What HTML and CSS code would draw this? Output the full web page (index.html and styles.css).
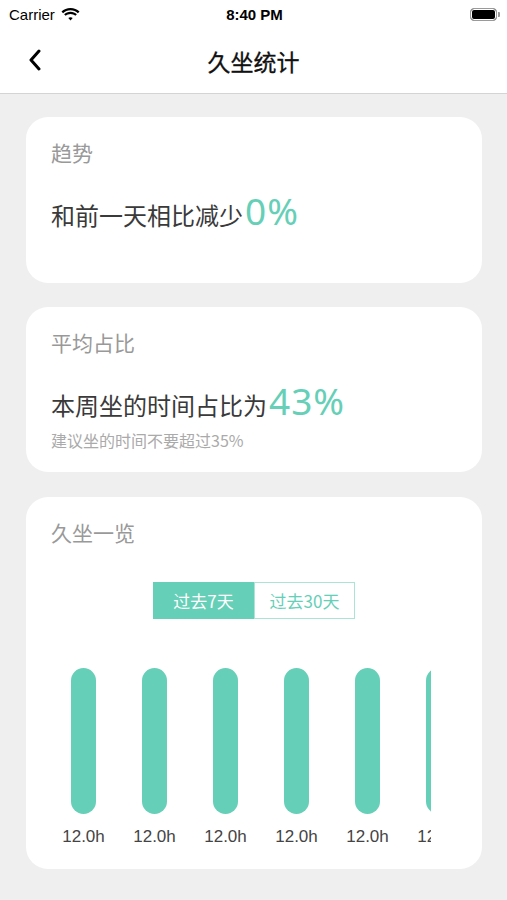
FILE: index.html
```html
<!DOCTYPE html>
<html lang="zh-CN">
<head>
  <meta charset="UTF-8">
  <meta name="viewport" content="width=device-width, initial-scale=1.0">
  <title>久坐统计</title>
  <link rel="stylesheet" href="styles.css">
</head>
<body>
  <div class="statusbar">
    <div class="carrier">
      Carrier
      <svg class="wifi" width="19" height="13" viewBox="0 0 19 13">
        <path d="M9.5 2.2c2.9 0 5.5 1.1 7.4 3l1.6-1.6C16.2 1.3 13 0 9.5 0S2.8 1.3.5 3.6l1.6 1.6c1.9-1.9 4.5-3 7.4-3z" fill="#000"/>
        <path d="M9.5 5.9c1.9 0 3.5.7 4.8 1.9l1.6-1.6C14.2 4.6 12 3.7 9.5 3.7S4.8 4.6 3.1 6.2l1.6 1.6c1.3-1.2 2.9-1.9 4.8-1.9z" fill="#000"/>
        <path d="M9.5 9.2c.9 0 1.6.3 2.2.9L9.5 12.6 7.3 10.1c.6-.6 1.3-.9 2.2-.9z" fill="#000"/>
      </svg>
    </div>
    <div class="time">8:40 PM</div>
    <div class="battery"><span class="battery-fill"></span><span class="battery-tip"></span></div>
  </div>

  <div class="navbar">
    <svg class="back" width="16" height="22" viewBox="0 0 16 22">
      <path d="M12 2 L4 11 L12 20" fill="none" stroke="#000" stroke-width="3" stroke-linecap="round" stroke-linejoin="round"/>
    </svg>
    <h1 class="title">久坐统计</h1>
  </div>

  <div class="content">
    <div class="card card-trend">
      <div class="card-title">趋势</div>
      <div class="card-main">和前一天相比减少<span class="num">0%</span></div>
    </div>

    <div class="card card-ratio">
      <div class="card-title">平均占比</div>
      <div class="card-main">本周坐的时间占比为<span class="num">43%</span></div>
      <div class="card-sub">建议坐的时间不要超过35%</div>
    </div>

    <div class="card card-list">
      <div class="card-title">久坐一览</div>
      <div class="tabs">
        <div class="tab active">过去7天</div>
        <div class="tab">过去30天</div>
      </div>
      <div class="chart">
        <div class="col"><div class="bar"></div><div class="label">12.0h</div></div>
        <div class="col"><div class="bar"></div><div class="label">12.0h</div></div>
        <div class="col"><div class="bar"></div><div class="label">12.0h</div></div>
        <div class="col"><div class="bar"></div><div class="label">12.0h</div></div>
        <div class="col"><div class="bar"></div><div class="label">12.0h</div></div>
        <div class="col"><div class="bar"></div><div class="label">12.0h</div></div>
        <div class="col"><div class="bar"></div><div class="label">12.0h</div></div>
      </div>
    </div>
  </div>
</body>
</html>
```

FILE: styles.css
```css
* {
  box-sizing: border-box;
}
body {
  margin: 0;
  background-color: #efefef;
  font-family: "Noto Sans", "Noto Sans CJK SC", sans-serif;
  color: #333;
}

/* status bar */
.statusbar {
  display: flex;
  align-items: center;
  justify-content: space-between;
  height: 28px;
  padding: 0 7px 0 9px;
  background: #fff;
  font-family: "Liberation Sans", sans-serif;
  font-size: 15px;
  color: #000;
}
.carrier {
  display: flex;
  align-items: center;
  gap: 6px;
  width: 100px;
}
.time {
  font-weight: bold;
}
.battery {
  display: flex;
  align-items: center;
  justify-content: flex-end;
  width: 100px;
}
.battery-fill {
  width: 27px;
  height: 13px;
  border: 1.5px solid #9a9a9a;
  border-radius: 4px;
  background: #000;
  box-shadow: inset 0 0 0 1px #fff;
}
.battery-tip {
  width: 2px;
  height: 5px;
  margin-left: 1px;
  background: #9a9a9a;
  border-radius: 0 1px 1px 0;
}

/* nav */
.navbar {
  position: relative;
  display: flex;
  align-items: center;
  justify-content: center;
  height: 66px;
  background: #fff;
  border-bottom: 1px solid #d4d4d4;
}
.back {
  position: absolute;
  left: 27px;
  top: 21px;
}
.title {
  margin: 0;
  font-family: "Noto Sans CJK SC", sans-serif;
  font-size: 23px;
  font-weight: 400;
  color: #111;
  -webkit-text-stroke: 0.3px #111;
}

/* cards */
.content {
  padding: 23px 25px 0 26px;
}
.card {
  background: #fff;
  border-radius: 22px;
  padding: 19px 25px 50px;
  margin-bottom: 24px;
}
.card-title {
  font-family: "Noto Sans CJK SC", sans-serif;
  font-size: 21px;
  line-height: 32px;
  color: #999;
}
.card-main {
  display: flex;
  align-items: baseline;
  margin-top: 21px;
  height: 44px;
  line-height: 44px;
  font-family: "Noto Sans CJK SC", sans-serif;
  font-size: 24px;
  color: #3a3a3a;
}
.num {
  font-family: "Noto Sans", sans-serif;
  font-size: 37px;
  color: #66cfb7;
  letter-spacing: 1px;
  margin-left: 2px;
}
.card-ratio {
  padding: 19px 25px 22px;
  margin-bottom: 25px;
}
.card-sub {
  margin-top: 7px;
  font-family: "Noto Sans CJK SC", sans-serif;
  font-size: 16px;
  line-height: 20px;
  color: #aaa;
}

/* chart card */
.card-list {
  padding: 19px 25px 20px;
}
.tabs {
  display: flex;
  justify-content: center;
  margin-top: 34px;
}
.tab {
  width: 101px;
  height: 37px;
  line-height: 35px;
  text-align: center;
  font-family: "Noto Sans CJK SC", sans-serif;
  font-size: 17px;
  color: #66cfb7;
  border: 1px solid #a9e4d5;
}
.tab.active {
  background: #66cfb7;
  border-color: #66cfb7;
  color: #fff;
}
.chart {
  display: flex;
  margin: 49px 26px 0 -3px;
  overflow: hidden;
}
.col {
  flex: 0 0 71px;
  display: flex;
  flex-direction: column;
  align-items: center;
}
.bar {
  width: 25px;
  height: 146px;
  border-radius: 13px;
  background: #66cfb7;
}
.label {
  margin-top: 11px;
  line-height: 24px;
  font-family: "Liberation Sans", sans-serif;
  font-size: 17px;
  color: #444;
}
```
